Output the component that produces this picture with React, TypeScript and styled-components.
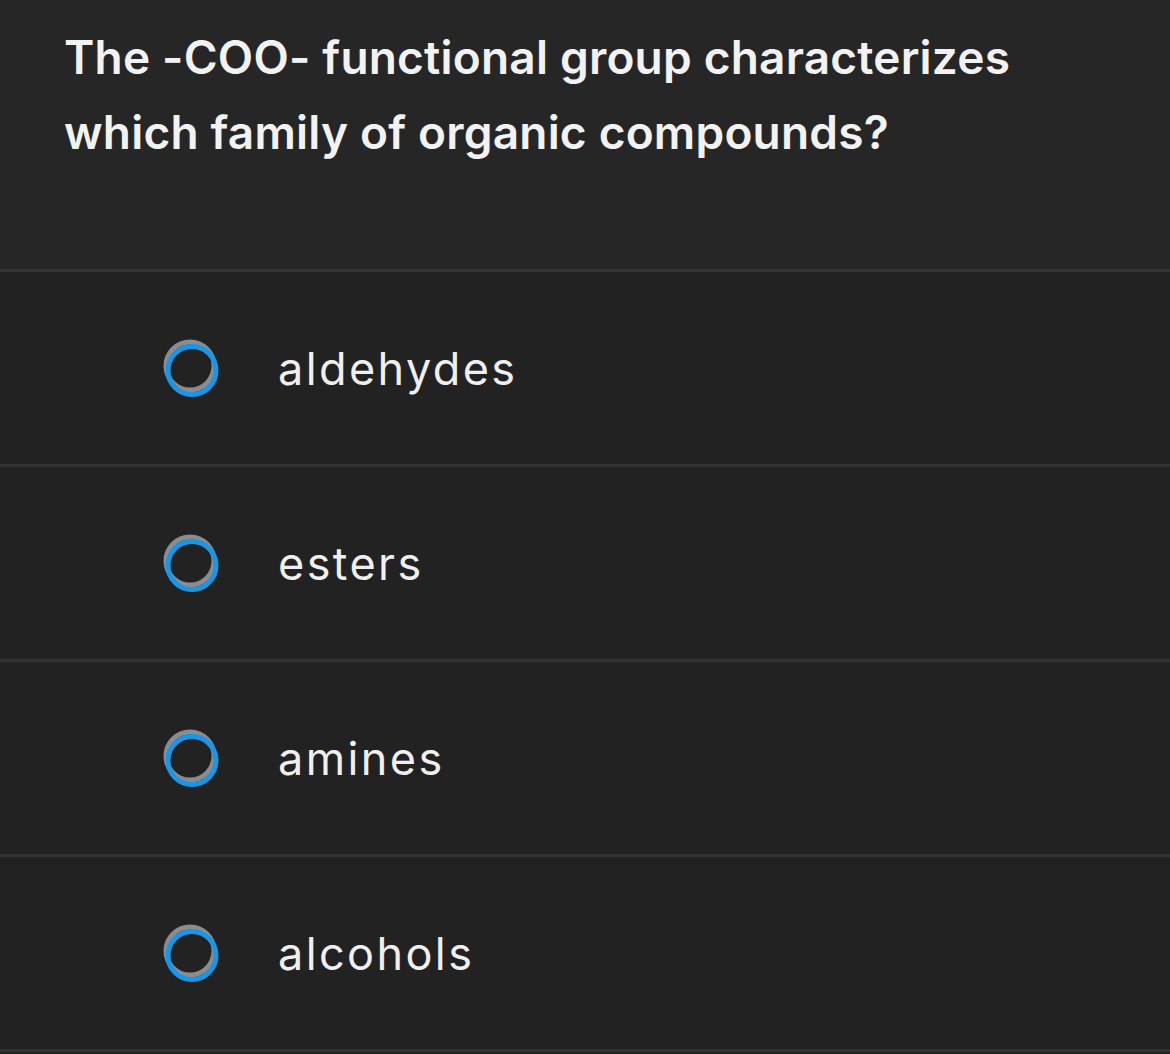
import React, { FC } from 'react';
import styled, { createGlobalStyle } from 'styled-components';

const GlobalStyle = createGlobalStyle`
  * {
    margin: 0;
    box-sizing: border-box;
  }
  body {
    background: #222222;
    font-family: Inter, "Open Sans", sans-serif;
  }
`;

const Root = styled.div`
  width: 1170px;
  height: 1054px;
  overflow: hidden;
  display: flex;
  flex-direction: column;
  background: #222222;
`;

const Header = styled.div`
  height: 272px;
  padding: 20px 40px 0 64px;
  background: #262626;
  border-bottom: 3px solid #333333;
`;

const Question = styled.h1`
  color: #f2f2f2;
  font-size: 46px;
  font-weight: 600;
  line-height: 75px;
  letter-spacing: 0.2px;
`;

const OptionList = styled.div`
  display: flex;
  flex-direction: column;
`;

const OptionRow = styled.label`
  height: 195px;
  display: flex;
  align-items: center;
  padding-left: 161px;
  border-bottom: 3px solid #333333;
  cursor: pointer;
`;

const RadioIcon = styled.svg`
  width: 60px;
  height: 60px;
  flex-shrink: 0;
  margin-top: 2px;
`;

const OptionText = styled.span`
  margin-left: 57px;
  color: #efefef;
  font-size: 45px;
  font-weight: 400;
  letter-spacing: 2.4px;
`;

const Radio: FC = () => (
  <RadioIcon viewBox="0 0 60 60">
    <circle cx="29" cy="27" r="24" fill="none" stroke="#8c8c8c" strokeWidth="5" />
    <circle cx="31" cy="31.5" r="24" fill="none" stroke="#1a96e6" strokeWidth="5" />
  </RadioIcon>
);

const options = ['aldehydes', 'esters', 'amines', 'alcohols'];

const App: FC = () => (
  <>
    <GlobalStyle />
    <Root>
      <Header>
        <Question>
          The -COO- functional group characterizes
          <br />
          which family of organic compounds?
        </Question>
      </Header>
      <OptionList>
        {options.map((opt) => (
          <OptionRow key={opt}>
            <Radio />
            <OptionText>{opt}</OptionText>
          </OptionRow>
        ))}
      </OptionList>
    </Root>
  </>
);

export default App;
